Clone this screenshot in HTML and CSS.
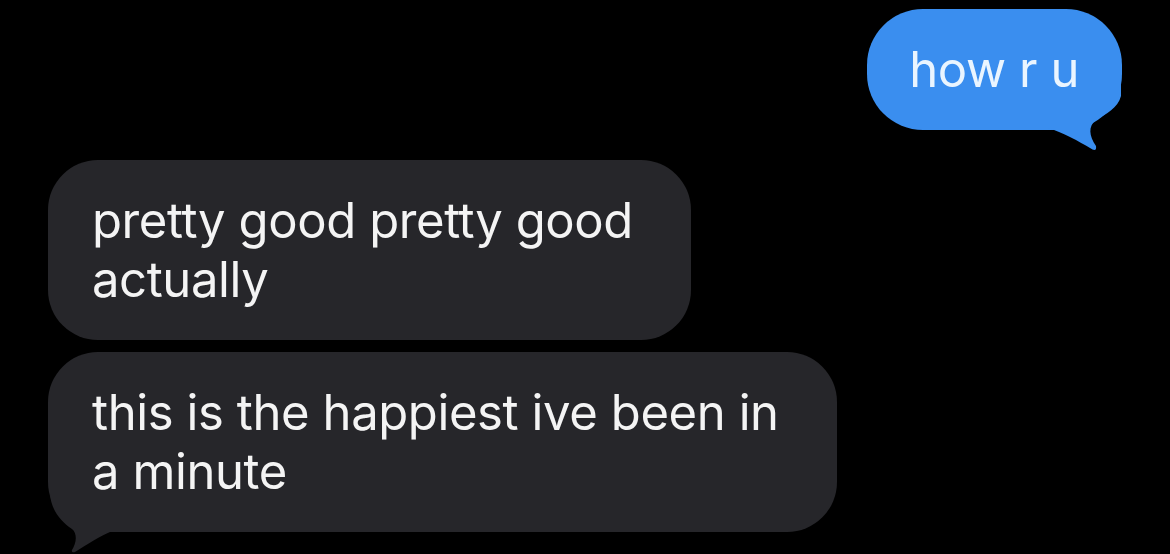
FILE: index.html
```html
<!DOCTYPE html>
<html lang="en">
<head>
    <meta charset="UTF-8">
    <meta name="viewport" content="width=device-width, initial-scale=1.0">
    <title>Messages</title>
    <link rel="stylesheet" href="styles.css">
</head>
<body>
    <div class="thread">
        <div class="bubble bubble--sent">
            <svg class="tail tail--sent" width="95" height="76" viewBox="0 0 95 76">
                <path d="M0 2 L0 50 L18 50 C32 54, 50 64, 60 70 Q67 75, 66 68 C59 58, 58 48, 66 42 C76 36, 88 30, 91 18 L91 2 Z"/>
            </svg>
            <span class="bubble__text">how r u</span>
        </div>

        <div class="bubble bubble--received bubble--first">
            <span class="bubble__text">pretty good pretty good<br>actually</span>
        </div>

        <div class="bubble bubble--received">
            <svg class="tail tail--received" width="90" height="90" viewBox="0 0 90 90">
                <path d="M6 4 L6 29 C7 44, 16 56, 28 64 C34 69, 32 79, 28 85 Q27 88, 31 87 C44 79, 56 71, 66 67 L86 67 L86 4 Z"/>
            </svg>
            <span class="bubble__text">this is the happiest ive been in<br>a minute</span>
        </div>
    </div>
</body>
</html>
```

FILE: styles.css
```css
body {
    margin: 0;
    background-color: #000;
    font-family: Inter, "Noto Sans", sans-serif;
}
.thread {
    display: flex;
    flex-direction: column;
    padding: 9px 48px 23px;
}
.bubble {
    position: relative;
    font-size: 49px;
    line-height: 59px;
    letter-spacing: -0.4px;
    border-radius: 56px;
}
.bubble__text {
    position: relative;
    z-index: 1;
}
.bubble--sent {
    align-self: flex-end;
    background-color: #3a8eef;
    color: #eaf5ff;
    padding: 31px 43px 31px 42px;
}
.bubble--received {
    align-self: flex-start;
    background-color: #26262a;
    color: #f4f4f4;
    padding: 31px 58px 31px 44px;
    border-radius: 50px;
}
.bubble--first {
    margin-top: 30px;
    margin-bottom: 12px;
}
.tail {
    position: absolute;
    z-index: 0;
    overflow: visible;
}
.tail--sent {
    right: -3px;
    bottom: -24px;
    fill: #3a8eef;
}
.tail--received {
    left: -4px;
    bottom: -23px;
    fill: #26262a;
}
```
